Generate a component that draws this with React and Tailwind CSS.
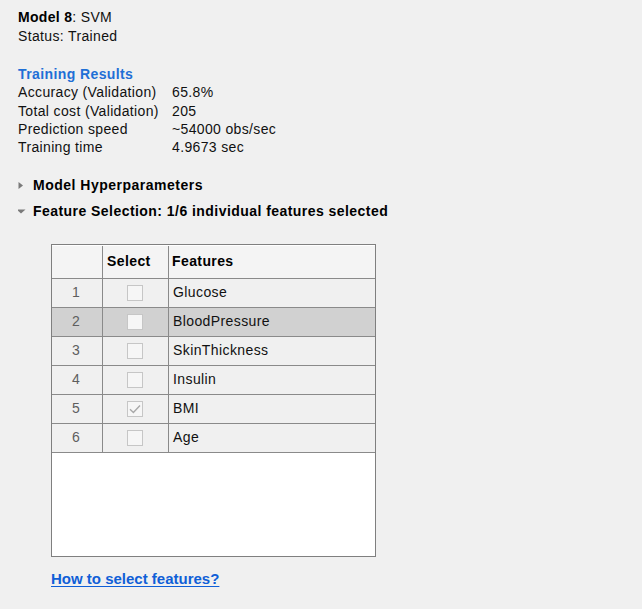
import React from 'react';

const results = [
  ['Accuracy (Validation)', '65.8%'],
  ['Total cost (Validation)', '205'],
  ['Prediction speed', '~54000 obs/sec'],
  ['Training time', '4.9673 sec'],
];

const features = [
  { id: 1, name: 'Glucose', checked: false },
  { id: 2, name: 'BloodPressure', checked: false, selected: true },
  { id: 3, name: 'SkinThickness', checked: false },
  { id: 4, name: 'Insulin', checked: false },
  { id: 5, name: 'BMI', checked: true },
  { id: 6, name: 'Age', checked: false },
];

// small disabled-looking checkbox used in the Select column
const Checkbox = ({ checked }) => (
  <div className="w-[16px] h-[16px] border border-[#c6c6c6] bg-[#f6f6f6] flex items-center justify-center">
    {checked && (
      <svg width="12" height="10" viewBox="0 0 12 10" fill="none">
        <path d="M1 5.2 L4.4 8.4 L11 1.4" stroke="#a8a8a8" strokeWidth="1.4" />
      </svg>
    )}
  </div>
);

const FeatureTable = () => (
  <div className="ml-[33px] w-[325px] h-[313px] border border-[#7f7f7f] bg-white flex flex-col">
    {/* Header */}
    <div className="flex h-[34px] border-b border-[#8a8a8a] bg-[#f4f4f4] border-t border-t-white font-bold text-black tracking-[0.4px]">
      <div className="w-[51px] border-r border-[#8a8a8a]" />
      <div className="w-[66px] border-r border-[#8a8a8a] flex items-center pl-[4px]">Select</div>
      <div className="flex-1 flex items-center pl-[3px]">Features</div>
    </div>
    {features.map((f) => (
      <div
        key={f.id}
        className={`flex h-[29px] border-b border-[#8a8a8a] ${f.selected ? 'bg-[#d1d1d1]' : 'bg-[#f0f0f0]'}`}
      >
        <div className="w-[51px] border-r border-[#8a8a8a] flex items-center justify-center text-[#5e5e5e] pr-[2px]">
          {f.id}
        </div>
        <div className="w-[66px] border-r border-[#8a8a8a] flex items-center justify-center pr-[1px]">
          <Checkbox checked={f.checked} />
        </div>
        <div className="flex-1 flex items-center pl-[4px] tracking-[0.4px] text-[#111]">{f.name}</div>
      </div>
    ))}
  </div>
);

export default function App() {
  return (
    <div className="w-[642px] h-[609px] bg-[#f0f0f0] font-['Liberation_Sans',Arial,sans-serif] text-[14px] text-[#111] pt-[8px] pl-[18px] overflow-hidden">
      <div className="leading-[19px] tracking-[0.35px]">
        <div>
          <span className="font-bold text-black tracking-[0.3px]">Model 8</span>: SVM
        </div>
        <div>Status: Trained</div>
      </div>

      <div className="mt-[19px] leading-[18.3px]">
        <div className="font-bold text-[#1f6fd6] tracking-[0.4px]">Training Results</div>
        <div className="grid grid-cols-[154px_1fr] tracking-[0.35px]">
          {results.map(([label, value]) => (
            <React.Fragment key={label}>
              <div>{label}</div>
              <div>{value}</div>
            </React.Fragment>
          ))}
        </div>
      </div>

      <div className="mt-[19.5px] flex items-center h-[19px] font-bold text-black tracking-[0.5px]">
        <svg width="15" height="19" viewBox="0 0 15 19">
          <path d="M0.5 6 L5 9.5 L0.5 13 Z" fill="#7a7a7a" />
        </svg>
        <span>Model Hyperparameters</span>
      </div>

      <div className="mt-[7px] flex items-center h-[19px] font-bold text-black tracking-[0.45px]">
        <svg width="15" height="19" viewBox="0 0 15 19">
          <path d="M-1.5 7.5 L7.5 7.5 L3 11.5 Z" fill="#7a7a7a" />
        </svg>
        <span>Feature Selection: 1/6 individual features selected</span>
      </div>

      <div className="mt-[23px]">
        <FeatureTable />
      </div>

      <div className="mt-[13px] ml-[33px] leading-[18px]">
        <a href="#" className="font-bold text-[15px] text-[#0f5fd7] underline underline-offset-[2px]">
          How to select features?
        </a>
      </div>
    </div>
  );
}
